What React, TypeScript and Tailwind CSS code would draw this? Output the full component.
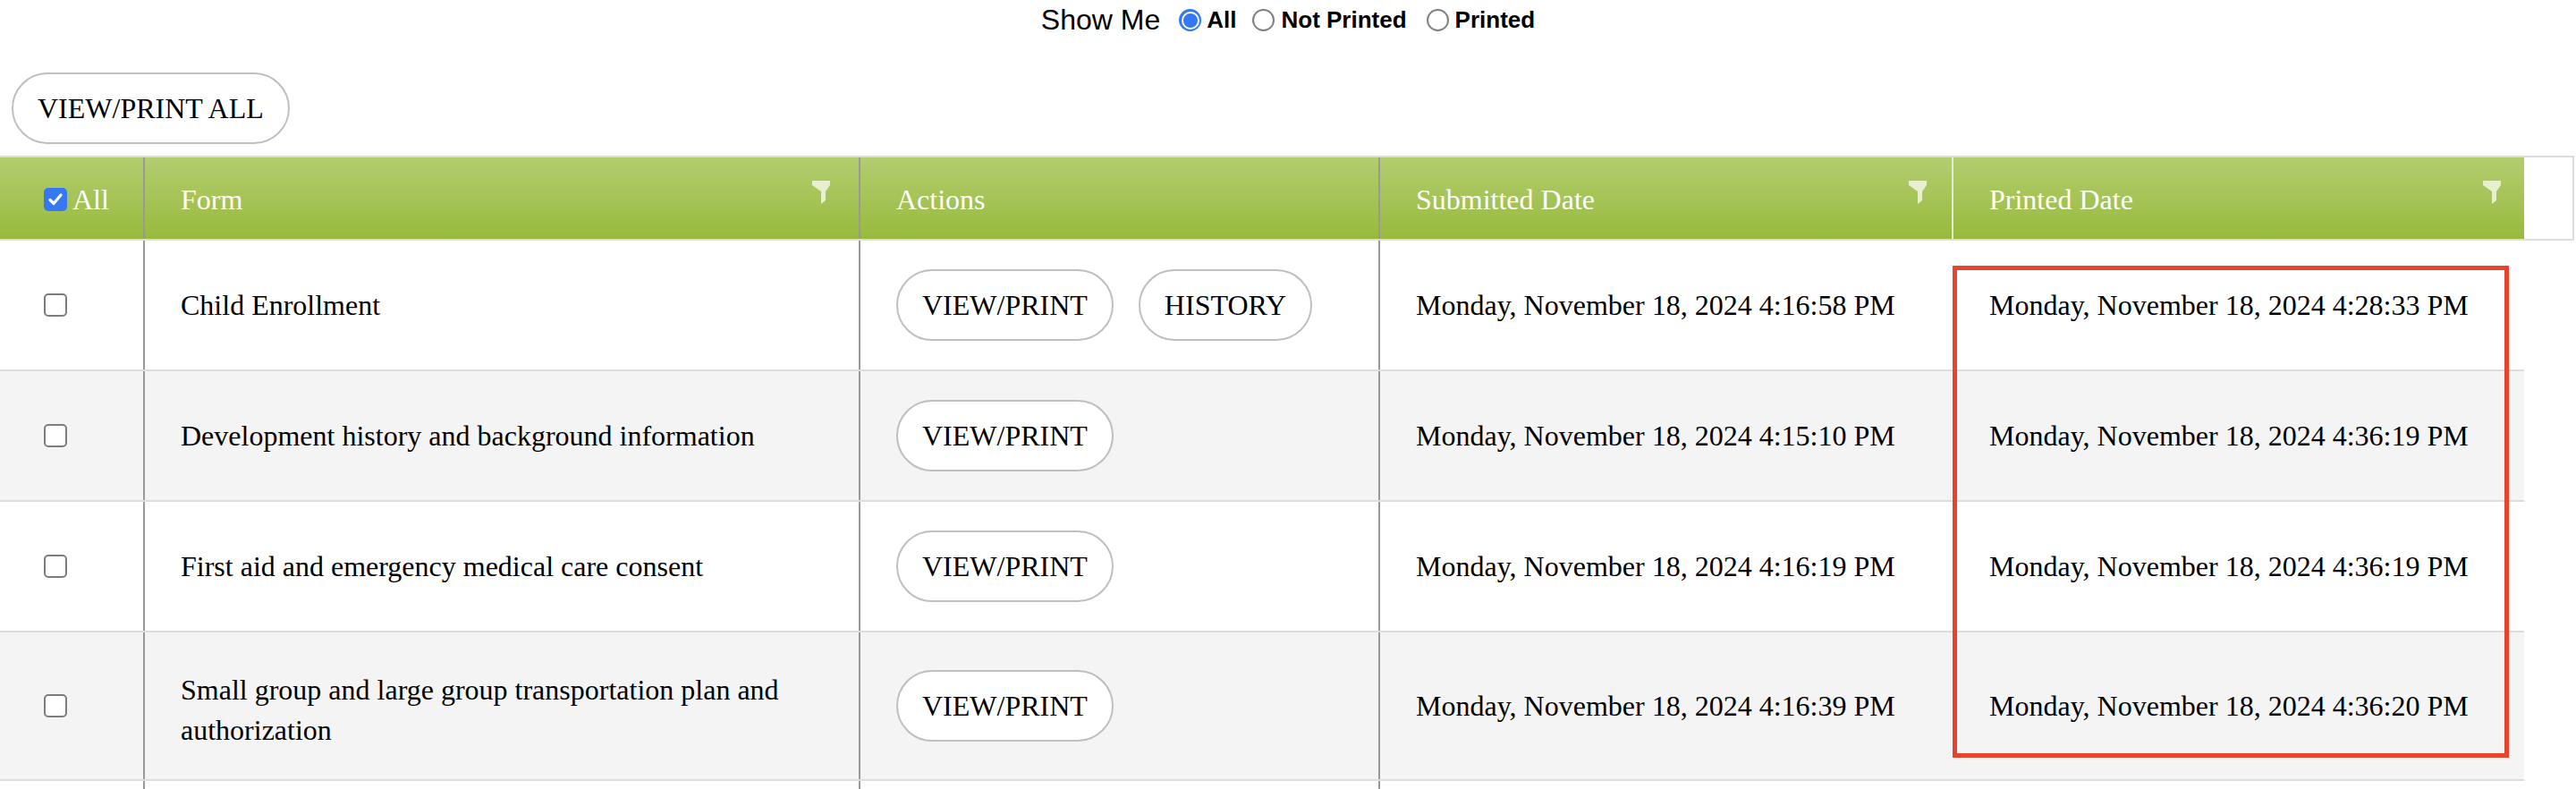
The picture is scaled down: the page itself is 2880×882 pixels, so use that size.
import React from 'react';

type Row = {
  form: string;
  submitted: string;
  printed: string;
  history?: boolean;
  tall?: boolean;
};

const rows: Row[] = [
  {
    form: 'Child Enrollment',
    submitted: 'Monday, November 18, 2024 4:16:58 PM',
    printed: 'Monday, November 18, 2024 4:28:33 PM',
    history: true,
  },
  {
    form: 'Development history and background information',
    submitted: 'Monday, November 18, 2024 4:15:10 PM',
    printed: 'Monday, November 18, 2024 4:36:19 PM',
  },
  {
    form: 'First aid and emergency medical care consent',
    submitted: 'Monday, November 18, 2024 4:16:19 PM',
    printed: 'Monday, November 18, 2024 4:36:19 PM',
  },
  {
    form: 'Small group and large group transportation plan and authorization',
    submitted: 'Monday, November 18, 2024 4:16:39 PM',
    printed: 'Monday, November 18, 2024 4:36:20 PM',
    tall: true,
  },
];

function Funnel() {
  return (
    <svg width="20" height="26" viewBox="0 0 20 26" className="shrink-0 block">
      <path d="M0 0H20V5L15 12V22L10 26V12L0 5Z" fill="#e7efcd" />
    </svg>
  );
}

function Radio({ checked }: { checked?: boolean }) {
  if (checked) {
    return (
      <span className="w-[25px] h-[25px] rounded-full bg-[#3478f6] flex items-center justify-center shrink-0">
        <span className="block w-[20px] h-[20px] rounded-full border-[2.5px] border-white bg-[#3478f6]" />
      </span>
    );
  }
  return <span className="block w-[25px] h-[25px] rounded-full border-2 border-[#808080] bg-white shrink-0" />;
}

function PillButton({ label }: { label: string }) {
  return (
    <button className="h-[80px] px-[27px] rounded-full border-2 border-[#bfbfbf] bg-white text-[32px] text-black font-['Liberation_Serif','Times_New_Roman',serif] whitespace-nowrap">
      {label}
    </button>
  );
}

export default function App() {
  return (
    <div className="w-[2880px] bg-white text-black font-['Liberation_Serif','Times_New_Roman',serif]">
      {/* Filter */}
      <div className="h-[41px] pt-[4px] flex items-center justify-center font-['Liberation_Sans',Arial,sans-serif]">
        <span className="text-[32px] leading-[37px]">Show Me</span>
        <span className="ml-[21px]"><Radio checked /></span>
        <span className="ml-[6px] text-[26px] font-bold">All</span>
        <span className="ml-[18px]"><Radio /></span>
        <span className="ml-[7px] text-[26px] font-bold">Not Printed</span>
        <span className="ml-[22px]"><Radio /></span>
        <span className="ml-[7px] text-[26px] font-bold">Printed</span>
      </div>

      <div className="pt-[40px] pl-[13px]">
        <PillButton label="VIEW/PRINT ALL" />
      </div>

      {/* Table */}
      <div className="relative mt-[13px]">
        {/* Header */}
        <div className="flex w-[2878px] h-[95px] border-y-2 border-[#dddddd] text-white text-[32px]">
          <div className="w-[162px] flex items-center pl-[49px] pt-[2px] border-r-2 border-[#999999] bg-gradient-to-b from-[#b3cd6f] to-[#98ba3b]">
            <span className="w-[26px] h-[26px] rounded-[5px] bg-[#3478f6] flex items-center justify-center">
              <svg width="18" height="18" viewBox="0 0 18 18">
                <path d="M3 9.5L7 13.5L15 4" fill="none" stroke="white" strokeWidth="3.2" strokeLinecap="round" strokeLinejoin="round" />
              </svg>
            </span>
            <span className="ml-[6px]">All</span>
          </div>
          <div className="w-[800px] flex items-center pl-[40px] pr-[32px] pt-[2px] border-r-2 border-[#999999] bg-gradient-to-b from-[#b3cd6f] to-[#98ba3b]">
            <span>Form</span>
            <span className="ml-auto self-start mt-[24px]"><Funnel /></span>
          </div>
          <div className="w-[581px] flex items-center pl-[40px] pt-[2px] border-r-2 border-[#999999] bg-gradient-to-b from-[#b3cd6f] to-[#98ba3b]">
            <span>Actions</span>
          </div>
          <div className="w-[641px] flex items-center pl-[40px] pr-[28px] pt-[2px] border-r-2 border-[#e4ebd3] bg-gradient-to-b from-[#b3cd6f] to-[#98ba3b]">
            <span>Submitted Date</span>
            <span className="ml-auto self-start mt-[24px]"><Funnel /></span>
          </div>
          <div className="w-[638px] flex items-center pl-[40px] pr-[26px] pt-[2px] bg-gradient-to-b from-[#b3cd6f] to-[#98ba3b]">
            <span>Printed Date</span>
            <span className="ml-auto self-start mt-[24px]"><Funnel /></span>
          </div>
          <div className="w-[56px] bg-white border-r-2 border-[#dddddd]" />
        </div>

        {/* Body */}
        <div className="w-[2822px] text-[32px]">
          {rows.map((row, i) => (
            <div
              key={row.form}
              className={`flex border-b-2 border-[#dddddd] ${row.tall ? 'h-[166px]' : 'h-[146px]'} ${i % 2 === 1 ? 'bg-[#f4f4f4]' : 'bg-white'}`}
            >
              <div className="w-[162px] flex items-center pl-[49px] border-r-2 border-[#999999]">
                <span className="w-[26px] h-[26px] rounded-[5px] border-2 border-[#7d7d7d] bg-white" />
              </div>
              <div className="w-[800px] flex items-center pl-[40px] pr-[40px] border-r-2 border-[#999999] leading-[45px]">
                <span className={row.tall ? 'pt-[10px]' : ''}>{row.form}</span>
              </div>
              <div className="w-[581px] flex items-center gap-[28px] pl-[40px] border-r-2 border-[#999999]">
                <PillButton label="VIEW/PRINT" />
                {row.history && <PillButton label="HISTORY" />}
              </div>
              <div className="w-[641px] flex items-center pl-[40px] whitespace-nowrap">
                {row.submitted}
              </div>
              <div className="w-[638px] flex items-center pl-[40px] whitespace-nowrap">
                {row.printed}
              </div>
            </div>
          ))}
          <div className="flex h-[146px] bg-white">
            <div className="w-[162px] border-r-2 border-[#999999]" />
            <div className="w-[800px] border-r-2 border-[#999999]" />
            <div className="w-[581px] border-r-2 border-[#999999]" />
          </div>
        </div>

        {/* Highlight box */}
        <div className="absolute left-[2183px] top-[123px] w-[622px] h-[550px] border-[5px] border-[#e8432d] pointer-events-none" />
      </div>
    </div>
  );
}
